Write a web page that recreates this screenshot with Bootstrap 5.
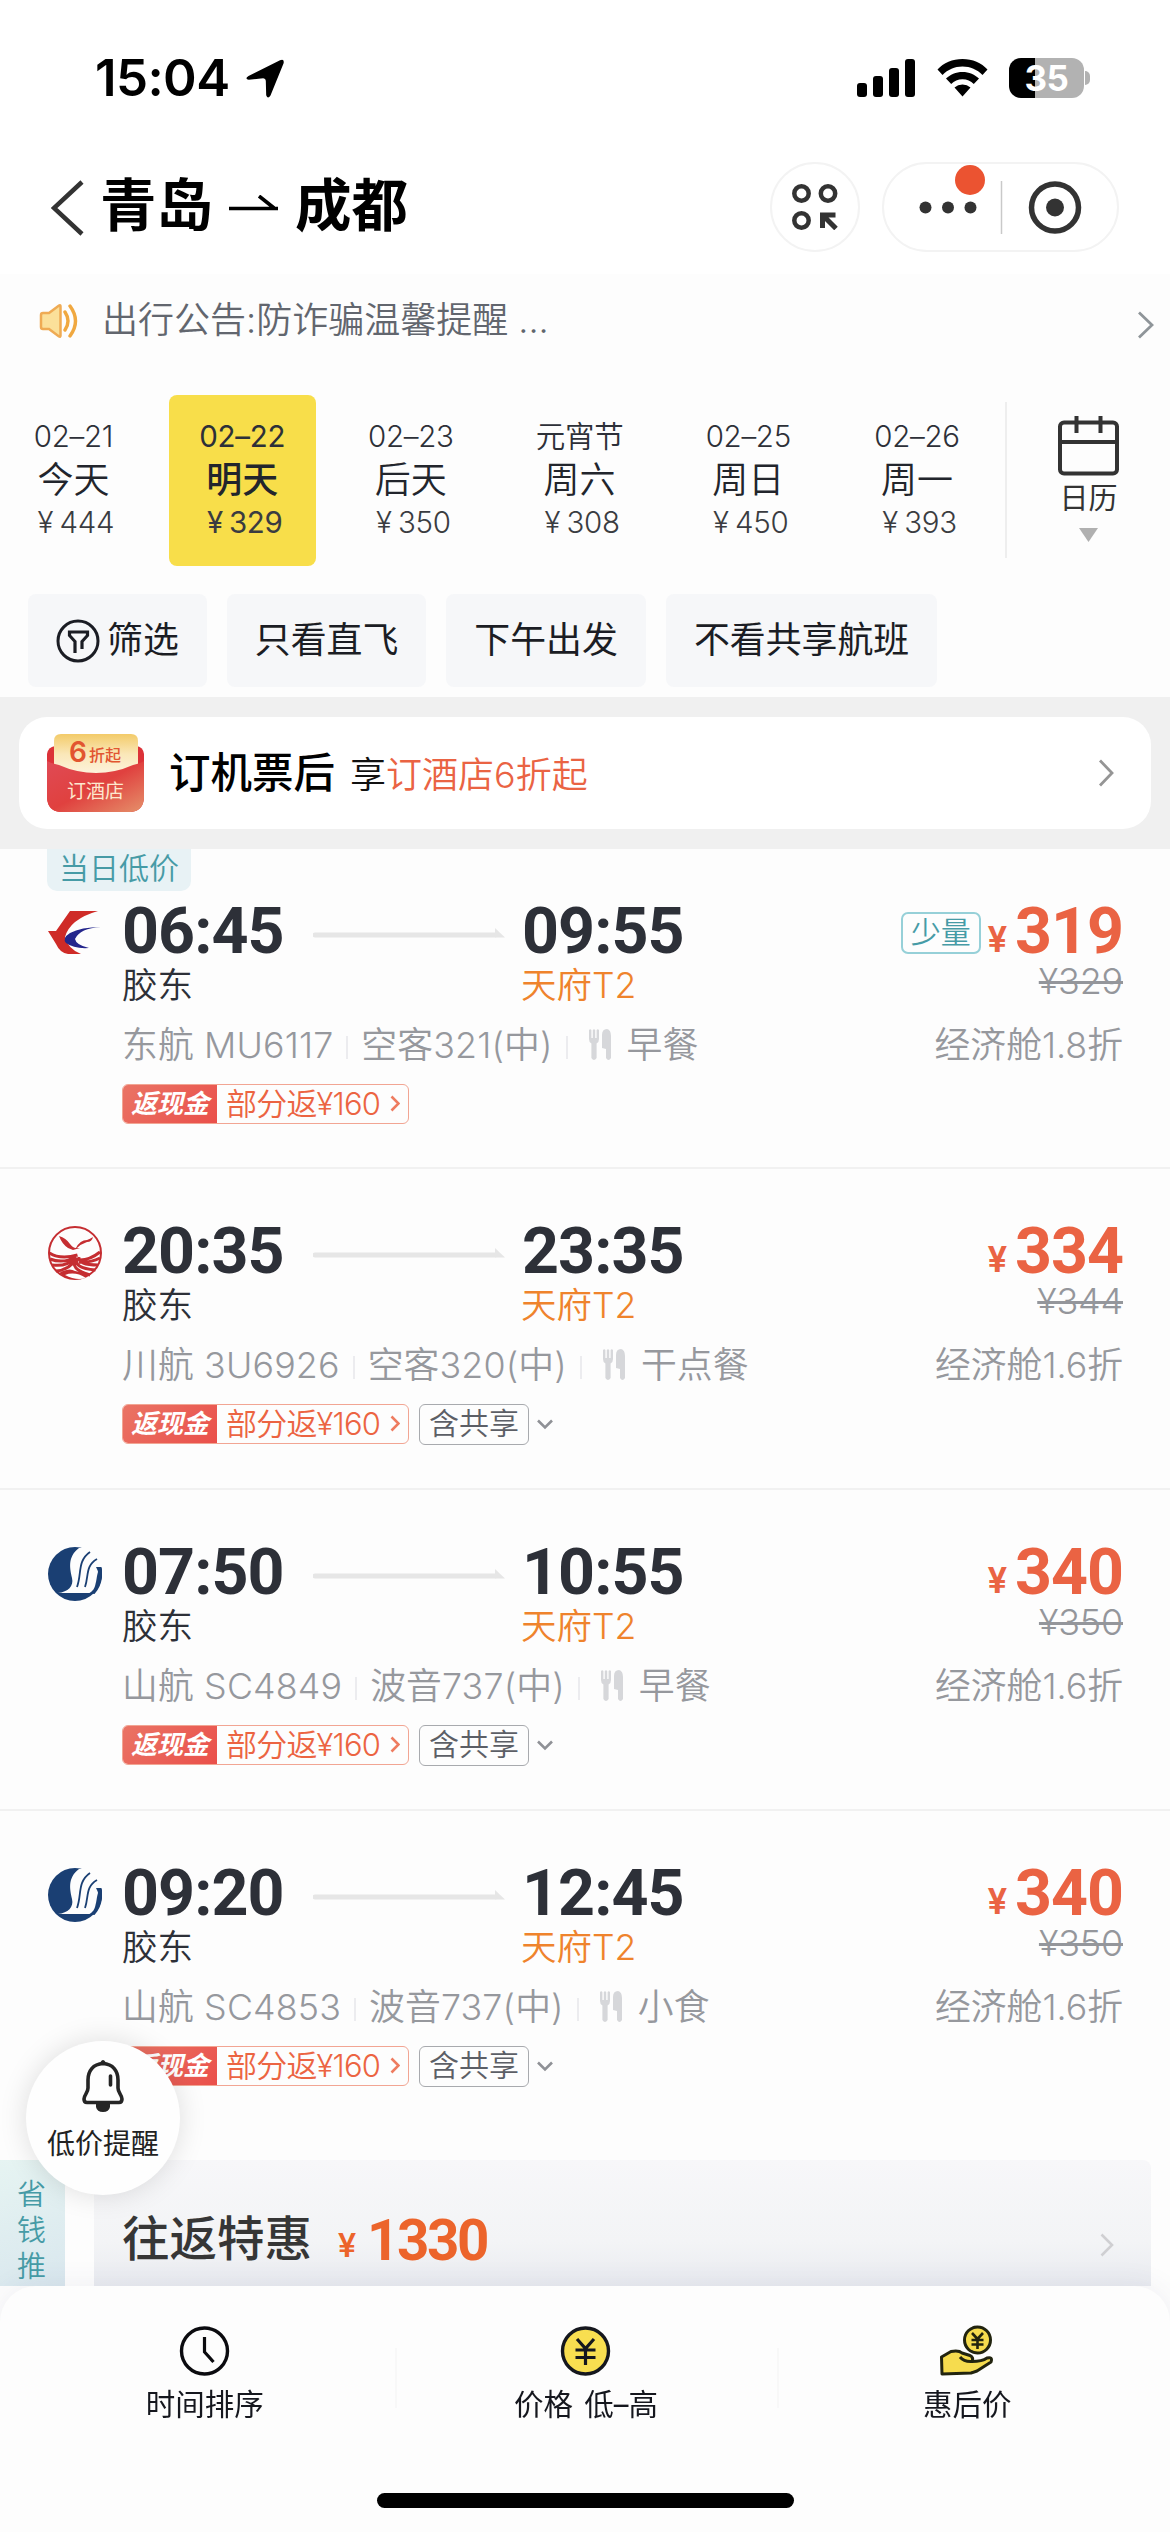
<!DOCTYPE html>
<html lang="zh-CN">
<head>
<meta charset="utf-8">
<meta name="viewport" content="width=device-width, initial-scale=1">
<title>青岛 - 成都</title>
<link href="https://cdn.jsdelivr.net/npm/bootstrap@5.3.0/dist/css/bootstrap.min.css" rel="stylesheet">
<style>
body{width:1170px;height:2532px;overflow:hidden;background:#fdfdfd;color:#2d3038;font-family:Inter,"Noto Sans CJK SC",sans-serif;font-weight:350;line-height:1;white-space:nowrap}
svg{display:block;flex:none}
.statusbar{height:156px;padding:0 80px 0 95px;background:#fff}
.clock-text{font-size:51px;font-weight:600;color:#000;letter-spacing:-.6px;line-height:60px}
.batt{width:75px;height:40px;border-radius:12px;background:linear-gradient(90deg,#000 26px,#b2b2b2 26px);color:#fff;font-size:35px;font-weight:700;line-height:40px;text-align:center;letter-spacing:-.5px}
.batt-nub{width:5px;height:14px;margin-left:1px;border-radius:0 5px 5px 0;background:#b2b2b2}
.wifi{margin:0 21px}
.topbar{height:118px;padding:6px 51px 0 51px;background:#fff;align-items:flex-start}
.back{margin-top:18px}
.to-arrow{margin:33px 16px 0}
.city{font-size:56.5px;font-weight:700;color:#000;line-height:88px}
.round-btn{width:90px;height:90px;border:2px solid #f3f3f3;border-radius:50%}
.capsule{width:237px;height:90px;margin-left:22px;border:2px solid #f3f3f3;border-radius:45px;position:relative}
.red-dot{position:absolute;left:71px;top:1px;width:30px;height:30px;border-radius:50%;background:#eb5331}
.notice{height:93px;padding:0 16px 0 39px}
.notice-text{font-size:36px;line-height:93px;color:#62666e;margin-left:23px}
.dates{height:199px;padding-top:28px}
.date-cell{flex:none;width:147px;height:171px;border-radius:8px;margin-right:21.7px;padding-top:20px;text-align:center}
.date-cell.on{background:#f8de4a}
.date-cell.on .wk{font-weight:500}
.date-cell.on div{font-weight:400}
.dt{font-size:29.5px;line-height:42px;letter-spacing:-.3px}
.wk{font-size:36px;line-height:46px;color:#22252c}
.pr{font-size:29.5px;line-height:38px;color:#3a3c41;padding-left:5px;letter-spacing:-.3px}
.yen{display:inline-block;width:22px;text-align:left;letter-spacing:0}
.cal{width:165px;border-left:2px solid #eee;height:156px;margin-top:7px;padding-top:14px}
.dates-strip{width:1005px;overflow:hidden}
.cal-text{font-size:29px;line-height:34px;color:#333;margin-top:6px;font-weight:400}
.tri{margin-top:11px}
.filters{height:131px;padding:28px 0 0 28px;gap:20px}
.chip{height:93px;border-radius:8px;background:#f6f7f9;font-size:35.9px;font-weight:400;color:#1b1d24;line-height:93px;padding:0 28px;border:0}
.chip-icon{margin-right:7px}
.promo-wrap{background:#f0f0f0;height:152px;padding:20px 19px}
.promo{height:112px;border-radius:28px;background:#fff;padding:0 37px 0 28px}
.promo h2{font-size:41.5px;font-weight:500;color:#000;margin:0 0 0 25px;line-height:60px}
.promo-sub{font-size:36px;line-height:60px;margin-left:15px;color:#111;padding-top:4px}
.promo-sub span{color:#ea6343}
.flight{height:321px;border-bottom:2px solid #f1f1f1;padding:51px 47px 0 48px;position:relative}
.flight.first{height:320px}
.flight.last{border-color:transparent}
.daytag{position:absolute;left:47px;top:0;width:144px;height:42px;border-radius:0 0 10px 10px;background:#e8f2f5;color:#469ba6;font-size:30px;line-height:39px;text-align:center}
.r-time{height:60px}.r-port{height:52px}.r-info{height:66px}.r-tags{height:52px}
.logo-col{width:74px}
.r-time .logo-col{padding-top:5px}
.dep-col{width:190px}
.route{margin:7px 0 0 1px}
.arr-col{margin-left:17px}
.tm,.price{font-family:Roboto,Inter,sans-serif;font-weight:700;font-size:64.5px;line-height:60px;letter-spacing:-.9px;padding-top:2px}
.price{color:#ea6343;letter-spacing:-1px}
.price-yen{font-family:Roboto,Inter,sans-serif;font-weight:600;font-size:36px;line-height:60px;color:#ea6343;margin-right:8px;padding-top:19px}
.few{height:42px;margin-top:6px;border:2px solid #96d0d8;border-radius:7px;color:#469ba6;font-size:30px;line-height:36px;padding:0 8px;margin-right:7px}
.port{font-size:35.5px;line-height:52px}
.port.arr{color:#ef832c;margin-left:209px}
.old{font-size:36px;line-height:42px;color:#94969b;text-decoration:line-through;text-decoration-thickness:3px;letter-spacing:-.2px}
.info,.cabin{font-size:35.8px;line-height:66px;color:#96989d}
.info{letter-spacing:.15px}
.sep{width:2px;height:23px;background:#ececef;margin:4px 13px 0}
.cash{height:40px;width:287px;border:1.5px solid #f2a593;border-radius:6px;overflow:hidden;margin-right:10px}
.cash-l{width:94px;height:40px;background:linear-gradient(135deg,#ea7465,#ea4f4a);color:#fff;font-size:26px;font-weight:700;font-style:italic;line-height:38px;text-align:center}
.cash-r{color:#ec6442;font-size:31px;line-height:37px;margin-left:9px;letter-spacing:-.8px}
.cash svg{margin:10px 8px 0 auto}
.share{height:41px;border:1.5px solid #a8aaae;border-radius:6px;font-size:30px;line-height:36px;color:#5c5f66;padding:0 9px}
.deal-row{margin-top:28px;height:126px}
.deal-side{width:65px;background:linear-gradient(160deg,#e6f4f2,#d9e7ee);color:#469ba6;font-size:29px;line-height:36px;padding-top:17px;padding-right:2px;text-align:center}
.deal-side span{display:block}
.deal{flex:1;margin:0 19px 0 29px;background:linear-gradient(#f7f7f9,#f3f4f6 65%,#e9ebf0);border-radius:0 8px 0 0;padding:20px 37px 0 28px;align-items:flex-start}
.deal-title{font-size:47.5px;font-weight:500;color:#363636;line-height:118px}
.deal-yen{font-family:Roboto,Inter,sans-serif;font-weight:500;font-size:34px;line-height:130px;color:#ec642b;margin-left:26px}
.deal-price{font-family:Roboto,Inter,sans-serif;font-weight:700;font-size:56.5px;line-height:122px;color:#ec642b;margin-left:11px;letter-spacing:-2.4px}
.deal svg{margin-top:53px}
.alert-fab{position:absolute;left:26px;top:2041px;width:154px;height:154px;border-radius:50%;background:#fefefe;box-shadow:0 0 28px rgba(0,0,0,.13);padding-top:18px;z-index:2}
.alert-fab div{font-size:28px;line-height:34px;font-weight:400;color:#222;margin-top:14px}
.bottombar{height:246px;border-radius:36px 36px 0 0;background:#fdfdfd;z-index:3;box-shadow:0 0 30px rgba(60,70,110,.08)}
.tabs{height:150px;padding:0 12px 0 14px}
.tab{flex:1 1 0;padding-top:39px}
.tab div{font-size:29.5px;line-height:36px;font-weight:400;color:#15171e;margin-top:10px;word-spacing:3px}
.tab + .tab{background:linear-gradient(#f8f8f8,#f8f8f8) left 62px/2px 60px no-repeat}
.home{width:417px;height:15px;border-radius:8px;background:#000;margin:57px auto 0}
</style>
</head>
<body class="position-relative">

<svg width="0" height="0" class="position-absolute">
  <defs>
    <symbol id="fork" viewBox="0 0 22 32"><path fill="#d6d7da" d="M0 1q1.200-1.500 2.400 0v8h1.400V1q1.200-1.500 2.400 0v8h1.400V1q1.200-1.500 2.400 0v9q0 3.500-2.400 4.500v14.500q-2.600 4-5.200 0V14.500Q0 13.500 0 10zM13 19V6q0-6 5-6 4 1 4 7v22q-2.500 4-5 0v-9z"/></symbol>
    <symbol id="route" viewBox="0 0 192 12"><path d="M2 7h180" stroke="#e6e6e6" stroke-width="5" stroke-linecap="round"/><path d="M182 0l10 9.500h-10z" fill="#e6e6e6"/></symbol>
    <symbol id="sc" viewBox="0 0 54 54"><circle cx="27" cy="27" r="27" fill="#1a3f73"/><path fill="#fdfdfd" d="M31 1C19 10 22 22 24 31 26 39 20 45 10 46h33C51 40 53 28 48 20L54 20V9L44 0z"/><path d="M42 5C29 14 34 27 29 40M49 12C37 19 41 29 37 40" fill="none" stroke="#1a3f73" stroke-width="1.800"/><path d="M53.500 20c-5 4-4 10-6 17-1 5-3 7-6 9l5 1c7-7 9-19 7-27z" fill="#1a3f73"/></symbol>
    <symbol id="cr" viewBox="0 0 10 17"><path d="M1.500 1.500l7 7-7 7" fill="none" stroke="#ee7c60" stroke-width="2.600"/></symbol>
    <symbol id="cd" viewBox="0 0 16 11"><path d="M1 1.500l7 7 7-7" fill="none" stroke="#8f9196" stroke-width="2.600"/></symbol>
  </defs>
</svg>

<header>
  <div class="statusbar d-flex align-items-center">
    <span class="clock-text">15:04</span>
    <svg class="ms-3" width="39" height="39" viewBox="0 0 39 39"><path d="M2.500 17L34 1.200q4.500-1.800 3.600 3L24.500 36.500q-2.800 4.200-4.300-.3l-.4-14.500q-.1-2.500-2.600-2.500L2.800 20.800q-4.600-1-.3-3.800z"/></svg>
    <div class="d-flex align-items-center ms-auto">
      <svg width="59" height="38" viewBox="0 0 59 38"><rect y="24" width="10" height="14" rx="3"/><rect x="16" y="17" width="10" height="21" rx="3"/><rect x="32" y="9" width="10" height="29" rx="3"/><rect x="48" y="0" width="10" height="38" rx="3"/></svg>
      <svg class="wifi" width="51" height="38" viewBox="0 0 51 38"><path d="M25.500 0C35.500 0 44.500 4 50.500 10.500L45.500 16C40 10.500 33.500 7.500 25.500 7.500S11 10.500 5.500 16L.5 10.500C6.500 4 15.500 0 25.500 0zM25.500 13C32 13 38 15.600 42 19.600L36.800 25C33.800 22 30 20.300 25.500 20.300S17.200 22 14.200 25L9 19.600C13 15.600 19 13 25.500 13zM25.500 25.600q4.600 0 8 3L25.500 37.500 17.500 28.600q3.400-3 8-3z"/></svg>
      <div class="batt">35</div>
      <div class="batt-nub"></div>
    </div>
  </div>
  <div class="topbar d-flex">
    <svg class="back" width="33" height="56" viewBox="0 0 33 56"><path d="M31 2L3 28l28 26" fill="none" stroke="#333" stroke-width="4.500"/></svg>
    <span class="city ms-3">青岛</span>
    <svg class="to-arrow" width="50" height="16" viewBox="0 0 50 16"><path d="M0 13.500h49M30 1l15 12" fill="none" stroke="#000" stroke-width="3.600"/></svg>
    <span class="city">成都</span>
    <div class="d-flex ms-auto">
      <div class="round-btn d-flex align-items-center justify-content-center">
        <svg width="46" height="46" viewBox="0 0 46 46"><g fill="none" stroke="#333" stroke-width="4.500"><circle cx="9.500" cy="9.500" r="7.200"/><circle cx="36" cy="9.500" r="7.200"/><circle cx="9.500" cy="36.500" r="7.200"/><path d="M30.500 44V31h13M31.500 32l12.500 12.500" stroke-width="5"/></g></svg>
      </div>
      <div class="capsule d-flex align-items-center">
        <svg width="233" height="86" viewBox="0 0 233 86"><g fill="#333"><circle cx="41.500" cy="43.500" r="6"/><circle cx="64" cy="43.500" r="6"/><circle cx="86.500" cy="43.500" r="6"/><circle cx="171" cy="43.500" r="9"/></g><circle cx="171" cy="43.500" r="23.500" fill="none" stroke="#333" stroke-width="5.500"/><path d="M117.500 17v53" stroke="#c9c9c9" stroke-width="1.500"/></svg>
        <div class="red-dot"></div>
      </div>
    </div>
  </div>
</header>

<section>
  <div class="notice d-flex align-items-center">
    <svg width="40" height="36" viewBox="0 0 40 36"><path d="M2 12q0-2 2-2h6L20 2.500q1.500-.8 1.500 1v29q0 1.800-1.500 1L10 26H4q-2 0-2-2z" fill="#fbe09a" stroke="#efab54" stroke-width="2.500"/><path d="M26 9q6 9 0 18M31 3q11 15 0 30" fill="none" stroke="#f0a840" stroke-width="3.400" stroke-linecap="round"/></svg>
    <span class="notice-text">出行公告:防诈骗温馨提醒 ...</span>
    <svg class="ms-auto mt-2" width="17" height="28" viewBox="0 0 17 28"><path d="M2 1.500L15 14 2 26.500" fill="none" stroke="#8f9599" stroke-width="2.800"/></svg>
  </div>

  <div class="dates d-flex">
    <div class="dates-strip d-flex">
      <div class="date-cell"><div class="dt">02–21</div><div class="wk">今天</div><div class="pr"><span class="yen">¥</span>444</div></div>
      <div class="date-cell on"><div class="dt">02–22</div><div class="wk">明天</div><div class="pr"><span class="yen">¥</span>329</div></div>
      <div class="date-cell"><div class="dt">02–23</div><div class="wk">后天</div><div class="pr"><span class="yen">¥</span>350</div></div>
      <div class="date-cell"><div class="dt">元宵节</div><div class="wk">周六</div><div class="pr"><span class="yen">¥</span>308</div></div>
      <div class="date-cell"><div class="dt">02–25</div><div class="wk">周日</div><div class="pr"><span class="yen">¥</span>450</div></div>
      <div class="date-cell"><div class="dt">02–26</div><div class="wk">周一</div><div class="pr"><span class="yen">¥</span>393</div></div>
    </div>
    <div class="cal d-flex flex-column align-items-center">
      <svg width="61" height="60" viewBox="0 0 61 60"><rect x="2" y="6.500" width="57" height="51" rx="4" fill="none" stroke="#333" stroke-width="4"/><path d="M2 26h57M18.500 0v17M42.500 0v17" stroke="#333" stroke-width="4"/></svg>
      <div class="cal-text">日历</div>
      <svg class="tri" width="21" height="15" viewBox="0 0 21 15"><path d="M1 1h19L10.500 15z" fill="#b0b0b0"/></svg>
    </div>
  </div>

  <div class="filters d-flex">
    <div class="chip d-flex align-items-center">
      <svg class="chip-icon" width="44" height="44" viewBox="0 0 44 44"><circle cx="22" cy="22" r="20" fill="none" stroke="#1b1d24" stroke-width="3"/><path d="M19 34V22.500l-5.500-6V13h18v3.500l-5.500 6V30" fill="none" stroke="#1b1d24" stroke-width="3.200"/></svg>筛选
    </div>
    <div class="chip">只看直飞</div>
    <div class="chip">下午出发</div>
    <div class="chip">不看共享航班</div>
  </div>
</section>

<div class="promo-wrap">
  <div class="promo d-flex align-items-center">
    <svg width="97" height="78" viewBox="0 0 97 78">
      <defs><linearGradient id="env" x1="0" y1="0" x2="1" y2="1"><stop offset="0" stop-color="#e04a55"/><stop offset=".5" stop-color="#e0413f"/><stop offset="1" stop-color="#e5906a"/></linearGradient><linearGradient id="flap" x1="0" y1="0" x2="0" y2="1"><stop offset="0" stop-color="#f3cb69"/><stop offset=".5" stop-color="#fae7b8"/><stop offset="1" stop-color="#fdf3dc"/></linearGradient></defs>
      <path d="M0 20Q1 13 8 12H90Q96 13 97 20V64Q96 77 84 78H13Q1 77 0 64z" fill="#dc3238"/>
      <path d="M7 7Q7 0 14 0H84Q91 0 91 7V40H7z" fill="url(#flap)"/>
      <path d="M0 27Q6 30 12 31 30 39 49 39T86 31Q92 30 97 27V64Q96 77 84 78H13Q1 77 0 64z" fill="url(#env)"/>
      <text x="22" y="28" font-family="Inter" font-weight="600" font-size="28" fill="#e25530">6</text>
      <text x="42" y="27" font-family="Noto Sans CJK SC" font-weight="500" font-size="16" fill="#e25530">折起</text>
      <text x="20" y="64" font-family="Noto Sans CJK SC" font-weight="400" font-size="19" fill="#fde8cf">订酒店</text>
    </svg>
    <h2>订机票后</h2>
    <div class="promo-sub">享<span>订酒店6折起</span></div>
    <svg class="ms-auto" width="16" height="28" viewBox="0 0 16 28"><path d="M2 1.500L14 14 2 26.500" fill="none" stroke="#959595" stroke-width="2.800"/></svg>
  </div>
</div>

<main>
  <article class="flight first">
    <div class="daytag">当日低价</div>
    <div class="r-time d-flex align-items-center">
      <div class="logo-col"><svg width="54" height="44" viewBox="0 0 54 44"><path d="M22 0H50Q22 8 17 26 20 38 33 43H20Q12 42 8 33L0 20h8z" fill="#cf2b27"/><path d="M53 16Q32 17 27 28 28 34 41 37 26 38 18 32 14 27 22 22 33 16 53 16z" fill="#24268c"/></svg></div>
      <div class="dep-col tm">06:45</div><svg class="route" width="192" height="12"><use href="#route"/></svg><div class="arr-col tm">09:55</div>
      <div class="ms-auto d-flex align-items-center"><span class="few">少量</span><span class="price-yen">¥</span><span class="price">319</span></div>
    </div>
    <div class="r-port d-flex"><div class="logo-col"></div><div class="port dep-col">胶东</div><div class="port arr">天府T2</div><div class="old ms-auto">¥329</div></div>
    <div class="r-info d-flex align-items-center"><div class="logo-col"></div><span class="info">东航 MU6117</span><i class="sep"></i><span class="info">空客321(中)</span><i class="sep"></i><svg class="mx-2" width="22" height="32"><use href="#fork"/></svg><span class="info ms-2">早餐</span><span class="cabin ms-auto">经济舱1.8折</span></div>
    <div class="r-tags d-flex align-items-center"><div class="logo-col"></div><div class="cash d-flex"><div class="cash-l">返现金</div><div class="cash-r">部分返¥160</div><svg width="10" height="17"><use href="#cr"/></svg></div></div>
  </article>

  <article class="flight">
    <div class="r-time d-flex align-items-center">
      <div class="logo-col"><svg width="54" height="56" viewBox="0 0 54 56"><circle cx="27" cy="28" r="26" fill="none" stroke="#c52d31" stroke-width="2"/><path d="M11 11q7 2 11 8 3 4 6 4 4-8 11-8 3-1 6-3-1 5-6 5-6 2-10 6h3l-7 2-5-2Q14 19 11 11z" fill="#c52d31"/><g fill="none" stroke="#c52d31" stroke-width="3"><path d="M1.500 28q11 7 28 2M2 34q13 5 26-2M4 40q15 2 23-7M8 46q13-1 19-11M28 34q-7 10 14 16M29.500 33q-5 10 18 12M31 32q-1 8 19 8M32 35Q42 35 52 27M31 37Q42 38 52 33"/></g><path d="M11 48q10-6 16-2 9 2 15 3Q27 60 11 48z" fill="#c52d31"/><path d="M17 50q10-4 21 3-10 3-21-3z" fill="#fff"/></svg></div>
      <div class="dep-col tm">20:35</div><svg class="route" width="192" height="12"><use href="#route"/></svg><div class="arr-col tm">23:35</div>
      <div class="ms-auto d-flex align-items-center"><span class="price-yen">¥</span><span class="price">334</span></div>
    </div>
    <div class="r-port d-flex"><div class="logo-col"></div><div class="port dep-col">胶东</div><div class="port arr">天府T2</div><div class="old ms-auto">¥344</div></div>
    <div class="r-info d-flex align-items-center"><div class="logo-col"></div><span class="info">川航 3U6926</span><i class="sep"></i><span class="info">空客320(中)</span><i class="sep"></i><svg class="mx-2" width="22" height="32"><use href="#fork"/></svg><span class="info ms-2">干点餐</span><span class="cabin ms-auto">经济舱1.6折</span></div>
    <div class="r-tags d-flex align-items-center"><div class="logo-col"></div><div class="cash d-flex"><div class="cash-l">返现金</div><div class="cash-r">部分返¥160</div><svg width="10" height="17"><use href="#cr"/></svg></div><div class="share">含共享</div><svg class="ms-2" width="16" height="11"><use href="#cd"/></svg></div>
  </article>

  <article class="flight">
    <div class="r-time d-flex align-items-center">
      <div class="logo-col"><svg width="54" height="54"><use href="#sc"/></svg></div>
      <div class="dep-col tm">07:50</div><svg class="route" width="192" height="12"><use href="#route"/></svg><div class="arr-col tm">10:55</div>
      <div class="ms-auto d-flex align-items-center"><span class="price-yen">¥</span><span class="price">340</span></div>
    </div>
    <div class="r-port d-flex"><div class="logo-col"></div><div class="port dep-col">胶东</div><div class="port arr">天府T2</div><div class="old ms-auto">¥350</div></div>
    <div class="r-info d-flex align-items-center"><div class="logo-col"></div><span class="info">山航 SC4849</span><i class="sep"></i><span class="info">波音737(中)</span><i class="sep"></i><svg class="mx-2" width="22" height="32"><use href="#fork"/></svg><span class="info ms-2">早餐</span><span class="cabin ms-auto">经济舱1.6折</span></div>
    <div class="r-tags d-flex align-items-center"><div class="logo-col"></div><div class="cash d-flex"><div class="cash-l">返现金</div><div class="cash-r">部分返¥160</div><svg width="10" height="17"><use href="#cr"/></svg></div><div class="share">含共享</div><svg class="ms-2" width="16" height="11"><use href="#cd"/></svg></div>
  </article>

  <article class="flight last">
    <div class="r-time d-flex align-items-center">
      <div class="logo-col"><svg width="54" height="54"><use href="#sc"/></svg></div>
      <div class="dep-col tm">09:20</div><svg class="route" width="192" height="12"><use href="#route"/></svg><div class="arr-col tm">12:45</div>
      <div class="ms-auto d-flex align-items-center"><span class="price-yen">¥</span><span class="price">340</span></div>
    </div>
    <div class="r-port d-flex"><div class="logo-col"></div><div class="port dep-col">胶东</div><div class="port arr">天府T2</div><div class="old ms-auto">¥350</div></div>
    <div class="r-info d-flex align-items-center"><div class="logo-col"></div><span class="info">山航 SC4853</span><i class="sep"></i><span class="info">波音737(中)</span><i class="sep"></i><svg class="mx-2" width="22" height="32"><use href="#fork"/></svg><span class="info ms-2">小食</span><span class="cabin ms-auto">经济舱1.6折</span></div>
    <div class="r-tags d-flex align-items-center"><div class="logo-col"></div><div class="cash d-flex"><div class="cash-l">返现金</div><div class="cash-r">部分返¥160</div><svg width="10" height="17"><use href="#cr"/></svg></div><div class="share">含共享</div><svg class="ms-2" width="16" height="11"><use href="#cd"/></svg></div>
  </article>

  <div class="deal-row d-flex">
    <div class="deal-side"><span>省</span><span>钱</span><span>推</span></div>
    <div class="deal d-flex">
      <span class="deal-title">往返特惠</span><span class="deal-yen">¥</span><span class="deal-price">1330</span>
      <svg class="ms-auto" width="14" height="24" viewBox="0 0 14 24"><path d="M1.500 1.500L12 12 1.500 22.500" fill="none" stroke="#cfcfd2" stroke-width="2.600"/></svg>
    </div>
  </div>
</main>

<div class="alert-fab d-flex flex-column align-items-center">
  <svg width="42" height="54" viewBox="0 0 42 54"><path d="M21 4.500C11 5 6 12 6 21v8c0 5-4 7-4 11q0 3.500 3 3.500h32q3 0 3-3.500c0-4-4-6-4-11v-8c0-9-5-16-15-16.500z" fill="none" stroke="#252525" stroke-width="3.600"/><path d="M18.500 5V3q2.500-4 5 0v2zM14 44h14v4q-1 5-7 5t-7-5z" fill="#252525"/><path d="M28.500 17v9" stroke="#252525" stroke-width="3.600" stroke-linecap="round"/></svg>
  <div>低价提醒</div>
</div>

<footer class="bottombar fixed-bottom">
  <div class="tabs d-flex">
    <div class="tab d-flex flex-column align-items-center"><svg width="51" height="51" viewBox="0 0 51 51"><circle cx="25.500" cy="26" r="23" fill="none" stroke="#0b0b0f" stroke-width="3.400"/><path d="M25.500 12v15l9 10" fill="none" stroke="#0b0b0f" stroke-width="3.200"/></svg><div>时间排序</div></div>
    <div class="tab d-flex flex-column align-items-center"><svg width="51" height="51" viewBox="0 0 51 51"><circle cx="25.500" cy="26" r="23" fill="#f8de50" stroke="#15171e" stroke-width="3.400"/><path d="M17 14l8.500 9.500L34 14M25.500 23v17M15.500 25h20M15.500 32.500h20" fill="none" stroke="#15171e" stroke-width="3.200"/></svg><div>价格 低–高</div></div>
    <div class="tab d-flex flex-column align-items-center"><svg width="56" height="51" viewBox="0 0 56 51"><g stroke="#22240f" stroke-width="3" stroke-linejoin="round"><path d="M2.500 32L12 26.500q8-1.500 11 1.500l8 2.500q4 2 2 6 10 0 15-3.500 6-1.500 4 4L38 46l-6 2L3 49z" fill="#f6dc4e"/><path d="M21 32q4 5 12 4.500" fill="none"/><circle cx="38.500" cy="15" r="13" fill="#f6dc4e"/></g><path d="M33 8l5.500 6L44 8M38.500 14v10M32.500 15h12M32.500 19.500h12" fill="none" stroke="#22240f" stroke-width="2.600"/></svg><div>惠后价</div></div>
  </div>
  <div class="home"></div>
</footer>
<script src="https://cdn.jsdelivr.net/npm/bootstrap@5.3.0/dist/js/bootstrap.bundle.min.js"></script>
</body>
</html>
